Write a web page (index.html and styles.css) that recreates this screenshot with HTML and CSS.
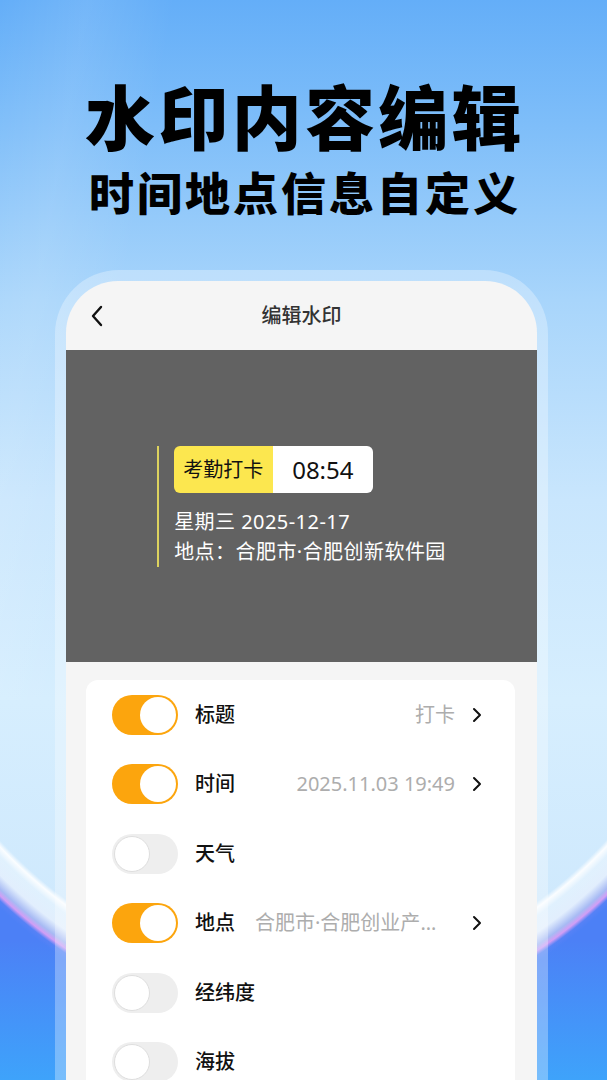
FILE: index.html
```html
<!DOCTYPE html>
<html lang="zh-CN">
<head>
<meta charset="utf-8">
<title>水印内容编辑</title>
<link rel="stylesheet" href="styles.css">
</head>
<body>
<div class="page">
  <header class="hero">
    <h1 class="hero-title">水印内容编辑</h1>
    <p class="hero-sub">时间地点信息自定义</p>
  </header>
  <div class="phone">
    <div class="screen">
      <div class="nav">
        <svg class="back" width="14" height="22" viewBox="0 0 14 22"><path d="M11 2 L3 11 L11 20" fill="none" stroke="#111" stroke-width="2.4" stroke-linecap="round" stroke-linejoin="round"/></svg>
        <div class="nav-title">编辑水印</div>
        <span class="nav-spacer"></span>
      </div>
      <div class="preview">
        <div class="wm">
          <div class="wm-badge"><span class="wm-tag">考勤打卡</span><span class="wm-time">08:54</span></div>
          <div class="wm-line wm-first">星期三 2025-12-17</div>
          <div class="wm-line">地点：合肥市·合肥创新软件园</div>
        </div>
      </div>
      <div class="card">
        <div class="row">
          <span class="toggle on"><span class="knob"></span></span>
          <span class="label">标题</span>
          <span class="value">打卡</span>
          <svg class="chev" width="10" height="16" viewBox="0 0 10 16"><path d="M2 2 L8 8 L2 14" fill="none" stroke="#111" stroke-width="2" stroke-linecap="round" stroke-linejoin="round"/></svg>
        </div>
        <div class="row">
          <span class="toggle on"><span class="knob"></span></span>
          <span class="label">时间</span>
          <span class="value">2025.11.03 19:49</span>
          <svg class="chev" width="10" height="16" viewBox="0 0 10 16"><path d="M2 2 L8 8 L2 14" fill="none" stroke="#111" stroke-width="2" stroke-linecap="round" stroke-linejoin="round"/></svg>
        </div>
        <div class="row">
          <span class="toggle"><span class="knob"></span></span>
          <span class="label">天气</span>
        </div>
        <div class="row">
          <span class="toggle on"><span class="knob"></span></span>
          <span class="label">地点</span>
          <span class="value">合肥市·合肥创业产业园区</span>
          <svg class="chev" width="10" height="16" viewBox="0 0 10 16"><path d="M2 2 L8 8 L2 14" fill="none" stroke="#111" stroke-width="2" stroke-linecap="round" stroke-linejoin="round"/></svg>
        </div>
        <div class="row">
          <span class="toggle"><span class="knob"></span></span>
          <span class="label">经纬度</span>
        </div>
        <div class="row">
          <span class="toggle"><span class="knob"></span></span>
          <span class="label">海拔</span>
        </div>
      </div>
    </div>
  </div>
</div>
</body>
</html>
```

FILE: styles.css
```css
html, body {
  margin: 0;
  padding: 0;
}

body {
  width: 607px;
  height: 1080px;
  overflow: hidden;
  font-family: "Noto Sans", "Noto Sans CJK SC", sans-serif;
  background:
    linear-gradient(180deg, rgba(62, 163, 251, 0) 940px, #3ea3fb 1080px),
    radial-gradient(ellipse 500px 620px at 303px 407px,
      rgba(255, 255, 255, 0) 0,
      rgba(255, 255, 255, 0) 92.5%,
      rgba(255, 255, 255, 0.9) 93.3%,
      rgba(255, 255, 255, 0.35) 94.5%,
      rgba(232, 240, 253, 0.75) 96.8%,
      rgba(160, 178, 242, 0.85) 98.6%,
      #d29ef5 99.4%,
      #5682f6 100.1%,
      #4c80f6 101%),
    linear-gradient(100deg, rgba(255, 255, 255, 0) 0, rgba(255, 255, 255, 0.1) 12%, rgba(255, 255, 255, 0) 24%) 0 0 / 607px 700px no-repeat,
    linear-gradient(180deg, #64aef8 0, #7dbdf9 120px, #a8d5fb 300px, #c9e6fd 500px, #d6eefe 700px, #cfe9fd 900px, #cfe9fd 1080px);
}

.page {
  width: 607px;
  height: 1080px;
  display: flex;
  flex-direction: column;
}

.hero {
  padding-top: 75px;
  text-align: center;
}

.hero-title {
  margin: 0 0 0 3px;
  font-family: "Noto Sans CJK SC", sans-serif;
  font-size: 70px;
  line-height: 80px;
  font-weight: 900;
  letter-spacing: 3.3px;
  color: #000;
}

.hero-sub {
  margin: 10px 0 0 3px;
  font-family: "Noto Sans CJK SC", sans-serif;
  font-size: 45px;
  line-height: 54px;
  font-weight: 900;
  letter-spacing: 3px;
  color: #000;
}

.phone {
  margin: 51px 0 0 55px;
  width: 493px;
  flex: 1;
  box-sizing: border-box;
  padding: 11px 11px 0 11px;
  border-radius: 64px 64px 0 0;
  background: rgba(255, 255, 255, 0.3);
  display: flex;
}

.screen {
  flex: 1;
  background: #f5f5f5;
  border-radius: 52px 52px 0 0;
  overflow: hidden;
  display: flex;
  flex-direction: column;
}

.nav {
  height: 69px;
  display: grid;
  grid-template-columns: 1fr auto 1fr;
  align-items: center;
  flex-shrink: 0;
}

.back {
  margin-left: 24px;
}

.nav-title {
  font-size: 20px;
  line-height: 28px;
  color: #333;
  font-weight: 500;
}

.preview {
  height: 312px;
  flex-shrink: 0;
  background: #626262;
  display: flex;
  align-items: center;
  justify-content: center;
}

.wm {
  border-left: 2px solid #dcd25e;
  padding-left: 15px;
}

.wm-badge {
  display: inline-flex;
  height: 47px;
  border-radius: 6px;
  overflow: hidden;
}

.wm-tag {
  background: #fce74f;
  color: #111;
  font-size: 20px;
  line-height: 47px;
  padding: 0 10px 0 9px;
}

.wm-time {
  background: #fff;
  color: #111;
  font-size: 24px;
  line-height: 47px;
  padding: 0 19px;
}

.wm-line {
  color: #fff;
  font-size: 20px;
  line-height: 30px;
  letter-spacing: 0.45px;
}

.wm-first {
  margin-top: 14px;
}

.card {
  margin: 18px 22px 0 20px;
  flex: 1;
  background: #fff;
  border-radius: 12px 12px 0 0;
}

.row {
  height: 69.5px;
  display: flex;
  align-items: center;
  padding-left: 26px;
}

.toggle {
  width: 66px;
  height: 40px;
  border-radius: 20px;
  background: #eeeeee;
  box-sizing: border-box;
  padding: 2px;
  display: flex;
  justify-content: flex-start;
  flex-shrink: 0;
}

.toggle .knob {
  width: 36px;
  height: 36px;
  border-radius: 50%;
  background: #fff;
  box-sizing: border-box;
  border: 1px solid #dedede;
}

.toggle.on {
  background: #fca50d;
  justify-content: flex-end;
}

.toggle.on .knob {
  border: none;
}

.label {
  margin-left: 17px;
  font-size: 20px;
  line-height: 28px;
  font-weight: 500;
  color: #111;
  flex-shrink: 0;
}

.value {
  flex: 1;
  min-width: 0;
  margin-left: 20px;
  text-align: right;
  font-size: 20px;
  line-height: 28px;
  color: #adadad;
  white-space: nowrap;
  overflow: hidden;
  text-overflow: ellipsis;
}

.chev {
  margin-left: 17px;
  margin-right: 33px;
  flex-shrink: 0;
}
```
